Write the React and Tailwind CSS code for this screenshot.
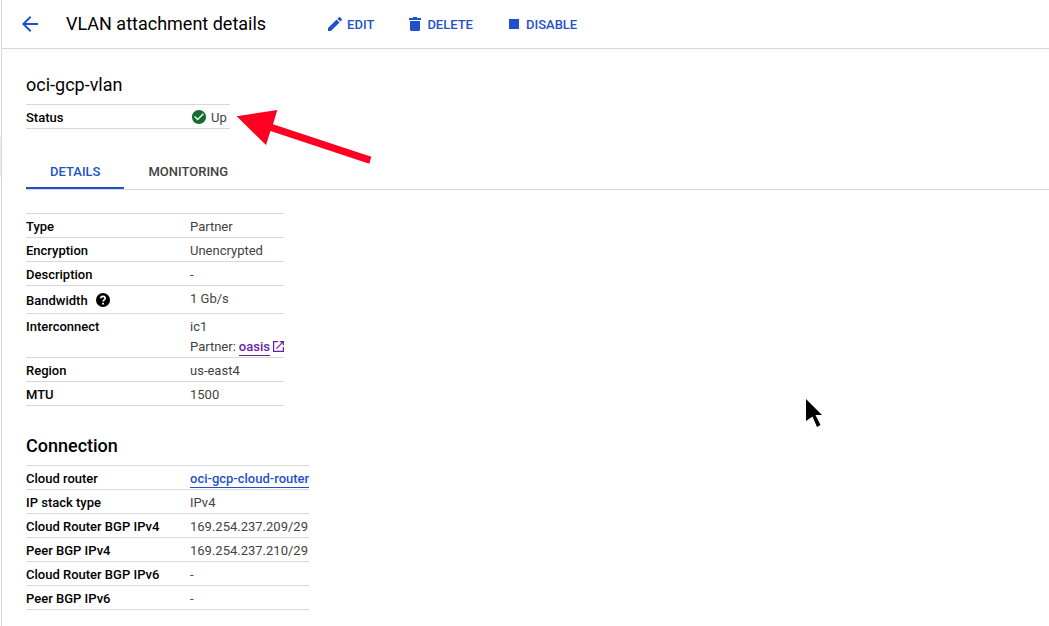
import React from "react";

function BackIcon() {
  return (
    <svg viewBox="4 4 16 16" className="size-4" fill="currentColor" aria-hidden="true">
      <path d="M20 11H7.83l5.59-5.59L12 4l-8 8 8 8 1.41-1.41L7.83 13H20v-2z" />
    </svg>
  );
}

function EditIcon() {
  return (
    <svg viewBox="3 3 18 18" className="size-3.5" fill="currentColor" aria-hidden="true">
      <path d="M3 17.25V21h3.75L17.81 9.94l-3.75-3.75L3 17.25zM20.71 7.04a.996.996 0 0 0 0-1.41l-2.34-2.34a.996.996 0 0 0-1.41 0l-1.83 1.83 3.75 3.75 1.83-1.83z" />
    </svg>
  );
}

function DeleteIcon() {
  return (
    <svg viewBox="0 0 12 14" className="h-3.5 w-3" fill="currentColor" aria-hidden="true">
      <path d="M4 0h4v1h4v2H0V1h4zM1 4h10v8.5c0 .8-.7 1.5-1.5 1.5h-7C1.7 14 1 13.3 1 12.5z" />
    </svg>
  );
}

function StopIcon() {
  return (
    <svg viewBox="0 0 10 10" className="size-2.5" fill="currentColor" aria-hidden="true">
      <path d="M0 0h10v10H0z" />
    </svg>
  );
}

function CheckIcon() {
  return (
    <svg viewBox="2 2 20 20" className="-mt-0.5 size-3.5 text-[#146c2e]" fill="currentColor" aria-hidden="true">
      <path d="M12 2C6.48 2 2 6.48 2 12s4.48 10 10 10 10-4.48 10-10S17.52 2 12 2zm-2 15l-5-5 1.41-1.41L10 14.17l7.59-7.59L19 8l-9 9z" />
    </svg>
  );
}

function HelpIcon() {
  return (
    <svg viewBox="2 2 20 20" className="-mt-0.5 size-3.5" aria-hidden="true">
      <circle cx="12" cy="12" r="10" fill="#000" />
      <path
        d="M9 9.6C9 7.8 10.3 6.8 12 6.8s3 1.1 3 2.7c0 2.3-2.9 2.3-2.9 4.7"
        fill="none"
        stroke="#fff"
        strokeWidth="2.4"
      />
      <path d="M10.8 15.8h2.6v2.6h-2.6z" fill="#fff" />
    </svg>
  );
}

function ExternalIcon() {
  return (
    <svg viewBox="3 3 18 18" className="mt-1 size-[11px]" fill="currentColor" aria-hidden="true">
      <path d="M19 19H5V5h6V3H3v18h18v-8h-2v6zM14 3v2h3.59l-9.83 9.83 1.41 1.41L19 6.41V10h2V3h-7z" />
    </svg>
  );
}

function ActionButton({ icon, children }) {
  return (
    <button type="button" className="flex items-center gap-[3px] text-[13px] leading-5 font-medium text-[#1f51cb]">
      <span className="flex size-4.5 items-center justify-center">{icon}</span>
      <span className="pt-px">{children}</span>
    </button>
  );
}

function Row({ label, children }) {
  return (
    <tr>
      <th scope="row" className="w-41 border-b border-[#d8d8d8] pt-[3px] text-left align-top font-medium whitespace-nowrap text-black">
        {label}
      </th>
      <td className="border-b border-[#d8d8d8] pt-[3px] align-top whitespace-nowrap">{children}</td>
    </tr>
  );
}

function PropertyTable({ label, rows }) {
  return (
    <table aria-label={label} className="border-separate border-spacing-0 border-t border-[#d8d8d8] text-[13px] leading-5 text-[#424242]">
      <tbody>
        {rows.map((row) => (
          <Row key={row.key} label={row.label ?? row.key}>
            {row.value}
          </Row>
        ))}
      </tbody>
    </table>
  );
}

const statusRows = [
  {
    key: "Status",
    value: (
      <span className="flex items-center gap-[5px] pr-[3px] pl-0.5">
        <CheckIcon />
        <span>Up</span>
      </span>
    ),
  },
];

const detailRows = [
  { key: "Type", value: "Partner" },
  { key: "Encryption", value: "Unencrypted" },
  { key: "Description", value: "-" },
  {
    key: "Bandwidth",
    label: (
      <span className="flex h-6 items-center gap-2">
        Bandwidth
        <HelpIcon />
      </span>
    ),
    value: "1 Gb/s",
  },
  {
    key: "Interconnect",
    value: (
      <>
        <div>ic1</div>
        <div className="flex h-5 items-start">
          <span className="mr-[3px]">Partner:</span>
          <a href="#oasis" className="flex items-start gap-[3px] font-medium text-[#681da8]">
            <span className="h-[19px] border-b border-[#681da8]">oasis</span>
            <ExternalIcon />
          </a>
        </div>
      </>
    ),
  },
  { key: "Region", value: "us-east4" },
  { key: "MTU", value: "1500" },
];

const connectionRows = [
  {
    key: "Cloud router",
    value: (
      <a href="#router" className="border-b border-[#1f51cb] pb-px font-medium text-[#1f51cb]">
        oci-gcp-cloud-router
      </a>
    ),
  },
  { key: "IP stack type", value: "IPv4" },
  { key: "Cloud Router BGP IPv4", value: "169.254.237.209/29" },
  { key: "Peer BGP IPv4", value: "169.254.237.210/29" },
  { key: "Cloud Router BGP IPv6", value: "-" },
  { key: "Peer BGP IPv6", value: "-" },
];

export default function App() {
  return (
    <div className="relative flex min-h-screen bg-white font-[Roboto,sans-serif] text-black">
      <div className="w-0.5 shrink-0 border-r border-[#d8d8d8] pt-[137px]">
        <div className="h-10 bg-[#e3effc]" />
      </div>
      <div className="min-w-0 flex-1">
        <header className="flex h-[49px] items-center border-b border-[#d8d8d8] pl-5">
          <button type="button" aria-label="Back" className="text-[#1f51cb]">
            <BackIcon />
          </button>
          <h1 className="ml-7 text-lg leading-6">VLAN attachment details</h1>
          <div className="ml-[60px] flex items-center gap-8">
            <ActionButton icon={<EditIcon />}>EDIT</ActionButton>
            <ActionButton icon={<DeleteIcon />}>DELETE</ActionButton>
            <ActionButton icon={<StopIcon />}>DISABLE</ActionButton>
          </div>
        </header>
        <main className="pt-6 pb-4 pl-6">
          <h2 className="mb-[7px] text-lg leading-6">oci-gcp-vlan</h2>
          <PropertyTable label="Status" rows={statusRows} />
          <div role="tablist" className="mt-6 flex h-[37px] border-b border-[#d8d8d8] text-[13px] font-medium">
            <button type="button" role="tab" aria-selected="true" className="border-b-2 border-[#1f51cb] px-6 pt-1 text-[#1f51cb]">
              DETAILS
            </button>
            <button type="button" role="tab" aria-selected="false" className="border-b-2 border-transparent px-6 pt-1 text-[#424242]">
              MONITORING
            </button>
          </div>
          <div className="pt-[23px]">
            <PropertyTable label="Attachment details" rows={detailRows} />
            <h2 className="mt-7 mb-[7px] text-lg leading-6 font-medium">Connection</h2>
            <PropertyTable label="Connection" rows={connectionRows} />
          </div>
        </main>
      </div>
      <svg viewBox="0 0 136 56" className="pointer-events-none absolute top-[109px] left-[236px] h-14 w-[136px]" aria-hidden="true">
        <path d="M.7 7.3 41.3 1 37 15.3 135.3 47.7 133.3 54.7 34.5 22 30 36z" fill="#ff0022" />
      </svg>
      <svg viewBox="0 0 17 29" className="pointer-events-none absolute top-[399px] left-[806px] h-[29px] w-[17px]" aria-hidden="true">
        <path d="M0 0 16 16H9.5L14.5 26 11 28 6.5 17.5 0 22z" fill="#000" />
      </svg>
    </div>
  );
}
